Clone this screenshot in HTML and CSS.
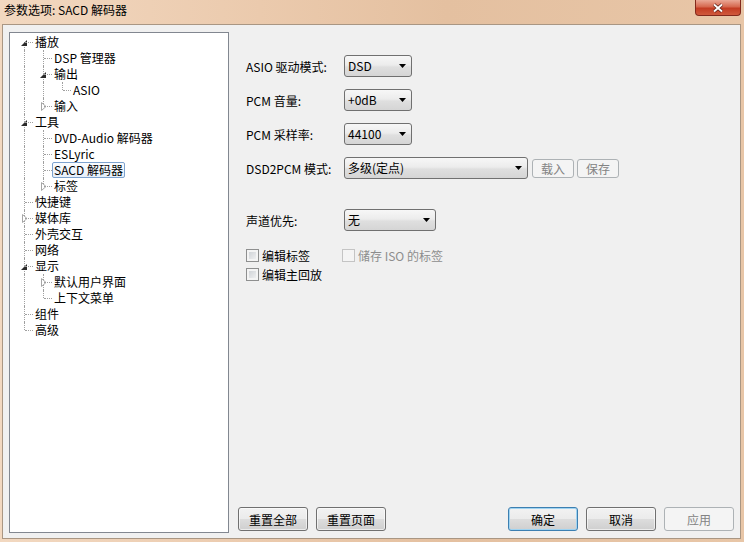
FILE: index.html
```html
<!DOCTYPE html>
<html lang="zh-CN">
  <head>
    <meta charset="UTF-8" />
    <title>参数选项: SACD 解码器</title>
    <link rel="stylesheet" href="styles.css">
  </head>
  <body>
    <div class="titlebar">
      <span class="caption">参数选项: SACD 解码器</span>
      <button class="close">
        <svg width="12" height="10" viewBox="0 0 12 10">
          <path d="M2 1.5l8 7M10 1.5l-8 7" stroke="#5b1f16" stroke-width="3.4" fill="none" />
          <path d="M2 1.5l8 7M10 1.5l-8 7" stroke="#fff" stroke-width="1.9" fill="none" />
        </svg>
      </button>
    </div>

    <div class="client">
      <!-- preferences tree -->
      <div class="tree">
        <div class="row"><span class="ln first"><svg class="open" width="6" height="6"><path d="M6 0V6H0Z" fill="#2b2b2b" /></svg></span><span class="t">播放</span></div>
        <div class="row"><span class="ln v"></span><span class="ln mid"></span><span class="t">DSP 管理器</span></div>
        <div class="row"><span class="ln v"></span><span class="ln mid"><svg class="open" width="6" height="6"><path d="M6 0V6H0Z" fill="#2b2b2b" /></svg></span><span class="t">输出</span></div>
        <div class="row"><span class="ln v"></span><span class="ln v"></span><span class="ln end"></span><span class="t">ASIO</span></div>
        <div class="row"><span class="ln v"></span><span class="ln end"><svg class="shut" width="6" height="9"><path d="M0.5 0.5L5 4.5L0.5 8.5Z" fill="#fff" stroke="#a6a6a6" /></svg></span><span class="t">输入</span></div>
        <div class="row"><span class="ln mid"><svg class="open" width="6" height="6"><path d="M6 0V6H0Z" fill="#2b2b2b" /></svg></span><span class="t">工具</span></div>
        <div class="row"><span class="ln v"></span><span class="ln mid"></span><span class="t">DVD-Audio 解码器</span></div>
        <div class="row"><span class="ln v"></span><span class="ln mid"></span><span class="t">ESLyric</span></div>
        <div class="row"><span class="ln v"></span><span class="ln mid"></span><span class="t sel">SACD 解码器</span></div>
        <div class="row"><span class="ln v"></span><span class="ln end"><svg class="shut" width="6" height="9"><path d="M0.5 0.5L5 4.5L0.5 8.5Z" fill="#fff" stroke="#a6a6a6" /></svg></span><span class="t">标签</span></div>
        <div class="row"><span class="ln mid"></span><span class="t">快捷键</span></div>
        <div class="row"><span class="ln mid"><svg class="shut" width="6" height="9"><path d="M0.5 0.5L5 4.5L0.5 8.5Z" fill="#fff" stroke="#a6a6a6" /></svg></span><span class="t">媒体库</span></div>
        <div class="row"><span class="ln mid"></span><span class="t">外壳交互</span></div>
        <div class="row"><span class="ln mid"></span><span class="t">网络</span></div>
        <div class="row"><span class="ln mid"><svg class="open" width="6" height="6"><path d="M6 0V6H0Z" fill="#2b2b2b" /></svg></span><span class="t">显示</span></div>
        <div class="row"><span class="ln v"></span><span class="ln mid"><svg class="shut" width="6" height="9"><path d="M0.5 0.5L5 4.5L0.5 8.5Z" fill="#fff" stroke="#a6a6a6" /></svg></span><span class="t">默认用户界面</span></div>
        <div class="row"><span class="ln v"></span><span class="ln end"></span><span class="t">上下文菜单</span></div>
        <div class="row"><span class="ln mid"></span><span class="t">组件</span></div>
        <div class="row"><span class="ln end"></span><span class="t">高级</span></div>
      </div>

      <!-- SACD decoder page -->
      <div class="page">
        <div class="form">
          <div class="field">
            <label>ASIO 驱动模式:</label>
            <div class="combo w68"><span>DSD</span><svg class="arrow" width="7" height="4"><path d="M0 0h7L3.5 4z" /></svg></div>
          </div>
          <div class="field">
            <label>PCM 音量:</label>
            <div class="combo w68"><span>+0dB</span><svg class="arrow" width="7" height="4"><path d="M0 0h7L3.5 4z" /></svg></div>
          </div>
          <div class="field">
            <label>PCM 采样率:</label>
            <div class="combo w68"><span>44100</span><svg class="arrow" width="7" height="4"><path d="M0 0h7L3.5 4z" /></svg></div>
          </div>
          <div class="field">
            <label>DSD2PCM 模式:</label>
            <div class="combo w184"><span>多级(定点)</span><svg class="arrow" width="7" height="4"><path d="M0 0h7L3.5 4z" /></svg></div>
            <button class="btn mini" disabled>载入</button>
            <button class="btn mini" disabled>保存</button>
          </div>
          <div class="field sep">
            <label>声道优先:</label>
            <div class="combo w92"><span>无</span><svg class="arrow" width="7" height="4"><path d="M0 0h7L3.5 4z" /></svg></div>
          </div>

          <div class="checks">
            <div class="check-row">
              <label class="check"><span class="box"></span>编辑标签</label>
              <label class="check disabled"><span class="box"></span>储存 ISO 的标签</label>
            </div>
            <div class="check-row">
              <label class="check"><span class="box"></span>编辑主回放</label>
            </div>
          </div>
        </div>

        <div class="actions">
          <div class="group">
            <button class="btn">重置全部</button>
            <button class="btn">重置页面</button>
          </div>
          <div class="group">
            <button class="btn default">确定</button>
            <button class="btn">取消</button>
            <button class="btn" disabled>应用</button>
          </div>
        </div>
      </div>
    </div>
  </body>
</html>
```

FILE: styles.css
```css
body {
  margin: 0;
  width: 744px;
  height: 542px;
  overflow: hidden;
  display: flex;
  flex-direction: column;
  font: 12px "Noto Sans CJK SC", sans-serif;
  color: #000;
  background: linear-gradient(90deg, #f2d8c0 0%, #ebcaad 35%, #e4c0a0 60%, #e8c6a7 100%);
}

/* window caption */
.titlebar {
  height: 24px;
  flex: none;
  display: flex;
  justify-content: space-between;
  align-items: flex-start;
}
.caption {
  padding: 2px 0 0 4px;
  line-height: 16px;
}
.close {
  width: 46px;
  height: 16px;
  margin-right: 3px;
  padding: 0;
  border: 1px solid #83291c;
  border-top: 0;
  border-radius: 0 0 4px 4px;
  background: linear-gradient(#eaa896, #d6684f 45%, #c33c23 55%, #d05a3d);
  display: flex;
  align-items: center;
  justify-content: center;
}

.client {
  flex: 1;
  min-height: 0;
  margin: 0 3px 3px 2px;
  border: 1px solid #a99683;
  background: #f0f0f0;
  display: flex;
}

/* tree view */
.tree {
  box-sizing: border-box;
  width: 220px;
  flex: none;
  margin: 7px 0 5px 6px;
  padding: 1px 0 0 4px;
  border: 1px solid #828790;
  background: #fff;
}
.row {
  display: flex;
  align-items: center;
  height: 16px;
  white-space: nowrap;
}
.ln {
  position: relative;
  flex: none;
  width: 19px;
  height: 16px;
}
.ln::before {
  content: "";
  position: absolute;
  left: 10px;
  top: 0;
  bottom: 0;
  border-left: 1px dotted #a0a0a0;
}
.ln.first::before {
  top: 8px;
}
.ln.end::before {
  bottom: 8px;
}
.ln.mid::after,
.ln.end::after,
.ln.first::after {
  content: "";
  position: absolute;
  left: 11px;
  right: 0;
  top: 8px;
  border-top: 1px dotted #a0a0a0;
}
.ln .open {
  position: absolute;
  left: 7px;
  top: 6px;
}
.ln .shut {
  position: absolute;
  left: 8px;
  top: 4px;
}
.t {
  border: 1px solid transparent;
  padding: 0 1px;
  line-height: 14px;
}
.t.sel {
  border-color: #7da2ce;
  border-radius: 2px;
  background: linear-gradient(#fbfcfe, #e6effa);
}

/* right page */
.page {
  flex: 1;
  display: flex;
  flex-direction: column;
  padding: 0 6px 7px 9px;
}
.form {
  display: flex;
  flex-direction: column;
  gap: 12px;
  padding: 30px 0 0 8px;
}
.field {
  display: flex;
  align-items: center;
  height: 22px;
}
.field label {
  width: 98px;
}
.field.sep {
  margin-top: 18px;
}
.combo {
  box-sizing: border-box;
  height: 22px;
  padding: 0 5px 0 3px;
  border: 1px solid #707070;
  border-radius: 3px;
  background: linear-gradient(#f7f7f7, #ececec 45%, #dfdfdf 55%, #d5d5d5);
  display: flex;
  align-items: center;
  justify-content: space-between;
  line-height: 16px;
}
.w68 { width: 68px; }
.w92 { width: 92px; }
.w184 { width: 184px; }
.arrow {
  fill: #000;
}

.checks {
  display: flex;
  flex-direction: column;
  margin-top: 3px;
}
.check-row {
  display: flex;
  align-items: center;
  height: 19px;
}
.check {
  display: flex;
  align-items: center;
  gap: 3px;
  width: 96px;
  flex: none;
  white-space: nowrap;
}
.box {
  box-sizing: border-box;
  flex: none;
  width: 13px;
  height: 13px;
  border: 1px solid #8e8f8f;
  background: linear-gradient(135deg, #c8ccd1, #f6f6f6);
  box-shadow: inset 0 0 0 2px #f4f4f4;
}
.check.disabled {
  width: auto;
  color: #8d8d8d;
}
.check.disabled .box {
  border-color: #c4c4c4;
  background: #f4f4f4;
}

/* buttons */
.btn {
  box-sizing: border-box;
  width: 70px;
  height: 24px;
  padding: 0;
  font: inherit;
  color: #000;
  border: 1px solid #707070;
  border-radius: 3px;
  background: linear-gradient(#f2f2f2, #ebebeb 50%, #dddddd 50%, #cfcfcf);
  box-shadow: inset 0 0 0 1px rgba(255, 255, 255, 0.6);
}
.btn:disabled {
  color: #838383;
  border-color: #adb2b5;
  background: #f4f4f4;
  box-shadow: none;
}
.btn.default {
  border-color: #3c7fb1;
  box-shadow: inset 0 0 0 1px #9fd3f1;
}
.btn.mini {
  width: 42px;
  height: 19px;
  margin-left: 4px;
}
.btn.mini + .btn.mini {
  margin-left: 3px;
}

.actions {
  margin-top: auto;
  display: flex;
  justify-content: space-between;
}
.group {
  display: flex;
  gap: 8px;
}
```
